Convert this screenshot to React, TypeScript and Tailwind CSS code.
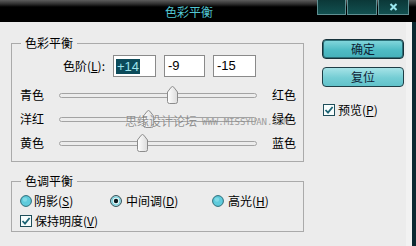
import React from "react";

const FONT = { fontFamily: '"Noto Sans CJK SC", "Liberation Sans", sans-serif' };

function Thumb({ left }: { left: number }) {
  return (
    <svg
      width="11"
      height="18"
      viewBox="0 0 11 18"
      className="absolute top-[-8px]"
      style={{ left }}
    >
      <defs>
        <linearGradient id="tg" x1="0" y1="0" x2="1" y2="0">
          <stop offset="0" stopColor="#ffffff" />
          <stop offset="1" stopColor="#dcdcdc" />
        </linearGradient>
      </defs>
      <path
        d="M0.5 6 L4.2 1.2 Q5.5 -0.2 6.8 1.2 L10.5 6 V15.5 Q10.5 17.5 8.5 17.5 H2.5 Q0.5 17.5 0.5 15.5 Z"
        fill="url(#tg)"
        stroke="#8c8c8c"
      />
    </svg>
  );
}

function SliderRow({ l, r, pos }: { l: string; r: string; pos: number }) {
  return (
    <div className="flex h-[24px] items-center pl-[8px]">
      <span className="w-[24px] text-[12px] leading-[14px] text-black">{l}</span>
      <div className="relative ml-[15px] h-[5px] w-[198px] rounded-full border border-[#a3a3a3] bg-[#ececec]">
        <Thumb left={pos} />
      </div>
      <span className="ml-[15px] text-[12px] leading-[14px] text-black">{r}</span>
    </div>
  );
}

function Check() {
  return (
    <svg width="12" height="12" viewBox="0 0 12 12">
      <rect x="0.5" y="0.5" width="11" height="11" fill="#f6fcfc" stroke="#1f4e5a" />
      <path d="M2.5 6 L5 8.6 L9.6 3" fill="none" stroke="#1c6474" strokeWidth="1.8" />
    </svg>
  );
}

function Radio({ on }: { on?: boolean }) {
  return (
    <svg width="12" height="12" viewBox="0 0 12 12">
      {on ? (
        <>
          <circle cx="6" cy="6" r="5.4" fill="#e8f8fa" stroke="#1d3f48" />
          <circle cx="6" cy="6" r="4" fill="none" stroke="#62c8d6" strokeWidth="1.2" />
          <circle cx="6" cy="6" r="2.2" fill="#0a1a1e" />
        </>
      ) : (
        <>
          <circle cx="6" cy="6" r="5.4" fill="#5fcbdc" stroke="#2d6c78" />
          <circle cx="5" cy="4.6" r="2.2" fill="#8fe0ea" opacity="0.7" />
        </>
      )}
    </svg>
  );
}

function U({ c }: { c: string }) {
  return <span className="underline underline-offset-[1px]">{c}</span>;
}

function WinBtn({ children }: { children?: React.ReactNode }) {
  return (
    <div className="flex h-[15px] items-center justify-center border border-t-0 border-[#5f8f92] bg-[linear-gradient(to_bottom,#0b3838,#125050)]">
      {children}
    </div>
  );
}

export default function App() {
  return (
    <div className="relative h-[246px] w-[416px] overflow-hidden bg-[#ececec]" style={FONT}>
      {/* title bar */}
      <div className="flex h-[22px] items-start bg-[linear-gradient(to_bottom,#5c5c5c_0px,#2e2e2e_4px,#000_7px,#000_100%)]">
        <div className="w-[317px] pl-[165px] pt-[5px] text-[12px] leading-[14px] text-[#52c6d2]">色彩平衡</div>
        <div className="grid w-[92px] grid-cols-[29px_30px_31px] gap-[1px]">
          <WinBtn />
          <WinBtn />
          <WinBtn>
            <svg width="9" height="8" viewBox="0 0 9 8">
              <path d="M1.5 1 L7.5 7 M7.5 1 L1.5 7" stroke="#9ae8ef" strokeWidth="2" />
            </svg>
          </WinBtn>
        </div>
      </div>

      <div className="flex h-[224px]">
        {/* left column */}
        <div className="w-[304px] pl-[11px]">
          <fieldset className="mt-[14px] w-[293px] border border-[#aaaaaa] pb-[6px]">
            <legend className="ml-[9px] px-[4px] text-[12px] leading-[14px] text-black">色彩平衡</legend>
            <div className="mt-[5px] flex items-center">
              <span className="w-[93px] text-right text-[12px] leading-[14px] text-black">
                色阶(<U c="L" />):
              </span>
              <div className="ml-[8px] flex h-[22px] w-[43px] items-center border border-[#8a8a8a] bg-white pl-[2px]">
                <span
                  className="bg-[#0c4b5a] px-[1px] text-[13px] leading-[15px] text-[#9fe4ec]"
                  style={{ fontFamily: '"Liberation Sans", sans-serif' }}
                >
                  +14
                </span>
              </div>
              <div
                className="ml-[8px] flex h-[22px] w-[41px] items-center border border-[#8a8a8a] bg-white pl-[3px] text-[13px] text-black"
                style={{ fontFamily: '"Liberation Sans", sans-serif' }}
              >
                -9
              </div>
              <div
                className="ml-[8px] flex h-[22px] w-[43px] items-center border border-[#8a8a8a] bg-white pl-[3px] text-[13px] text-black"
                style={{ fontFamily: '"Liberation Sans", sans-serif' }}
              >
                -15
              </div>
            </div>
            <div className="mt-[6px]">
              <SliderRow l="青色" r="红色" pos={107} />
              <SliderRow l="洋红" r="绿色" pos={83} />
              <SliderRow l="黄色" r="蓝色" pos={77} />
            </div>
          </fieldset>

          <fieldset className="mt-[12px] w-[293px] border border-[#aaaaaa]">
            <legend className="ml-[9px] px-[4px] text-[12px] leading-[14px] text-black">色调平衡</legend>
            <div className="mt-[3px] flex h-[20px] items-center pl-[8px] text-[12px] leading-[14px] text-black">
              <div className="flex w-[90px] items-center gap-[2px]">
                <Radio />
                <span>
                  阴影(<U c="S" />)
                </span>
              </div>
              <div className="flex w-[102px] items-center gap-[4px]">
                <Radio on />
                <span>
                  中间调(<U c="D" />)
                </span>
              </div>
              <div className="flex items-center gap-[4px]">
                <Radio />
                <span>
                  高光(<U c="H" />)
                </span>
              </div>
            </div>
            <div className="flex h-[20px] items-center gap-[3px] pl-[8px] text-[12px] leading-[14px] text-black">
              <Check />
              <span>
                保持明度(<U c="V" />)
              </span>
            </div>
          </fieldset>
        </div>

        {/* right column */}
        <div className="ml-[18px] flex w-[82px] flex-col">
          <button className="mt-[17px] h-[20px] w-[82px] rounded-[4px] border border-[#16323a] bg-[linear-gradient(to_bottom,#86d8de,#4fbcc5_55%,#45b0ba)] text-[12px] leading-[14px] text-[#0e2236] shadow-[inset_0_0_0_1px_#2c6f78]">
            确定
          </button>
          <button className="mt-[8px] h-[20px] w-[82px] rounded-[4px] border border-[#1f3e46] bg-[linear-gradient(to_bottom,#a6e3e7,#74cdd4_55%,#62c2ca)] text-[12px] leading-[14px] text-[#0e2236]">
            复位
          </button>
          <div className="mt-[16px] flex items-center gap-[3px] pl-[1px] text-[12px] leading-[14px] text-black">
            <Check />
            <span>
              预览(<U c="P" />)
            </span>
          </div>
        </div>

        <div className="ml-auto w-[6px] bg-[#f2f2f2]" />
        <div className="w-[4px] bg-[#0b2830]" />
      </div>

      {/* watermark */}
      <div className="pointer-events-none absolute left-[125px] top-[114px] flex items-end gap-[5px] opacity-80">
        <span className="text-[12px] leading-[14px] text-[#7a7a7a] [text-shadow:0_0_2px_#fff]">思缘设计论坛</span>
        <span
          className="text-[9px] leading-[11px] text-[#8a8a8a]"
          style={{ fontFamily: '"DejaVu Sans Mono", monospace' }}
        >
          WWW.MISSYUAN.COM
        </span>
      </div>
    </div>
  );
}
